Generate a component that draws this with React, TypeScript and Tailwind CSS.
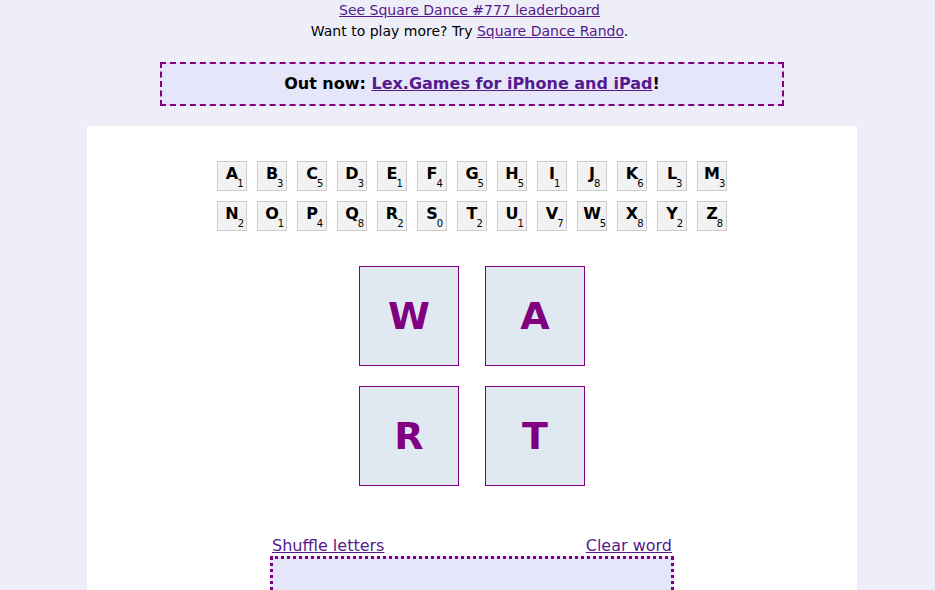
const row1: [string, number][] = [
  ["A", 1], ["B", 3], ["C", 5], ["D", 3], ["E", 1], ["F", 4], ["G", 5],
  ["H", 5], ["I", 1], ["J", 8], ["K", 6], ["L", 3], ["M", 3],
];
const row2: [string, number][] = [
  ["N", 2], ["O", 1], ["P", 4], ["Q", 8], ["R", 2], ["S", 0], ["T", 2],
  ["U", 1], ["V", 7], ["W", 5], ["X", 8], ["Y", 2], ["Z", 8],
];

function SmallTile({ letter, score }: { letter: string; score: number }) {
  return (
    <div className="flex h-[30px] w-[30px] items-start justify-center border border-[#cccccc] bg-[#f2f2f2] pt-[4px]">
      <span className="relative text-[16px] font-bold leading-none text-black">
        {letter}
        <span className="absolute left-full top-[13px] ml-[-1px] text-[10px] font-normal leading-none text-black">
          {score}
        </span>
      </span>
    </div>
  );
}

function BigTile({ letter }: { letter: string }) {
  return (
    <div className="flex h-[100px] w-[100px] items-center justify-center border border-[#800080] bg-[#e0e8f1]">
      <span className="text-[38px] font-bold leading-none text-[#800080]">{letter}</span>
    </div>
  );
}

export default function App() {
  return (
    <div
      className="min-h-[590px] bg-[#eeeef9] pl-[9px] text-black"
      style={{ fontFamily: '"DejaVu Sans", sans-serif' }}
    >
      <div className="flex flex-col items-center pr-[5px] text-[14px] leading-[20px]">
        <a href="#" className="text-[#551a8b] underline">
          See Square Dance #777 leaderboard
        </a>
        <p className="mt-[1px]">
          Want to play more? Try{" "}
          <a href="#" className="text-[#551a8b] underline">
            Square Dance Rando
          </a>
          .
        </p>
      </div>

      <div className="mx-auto mt-[21px] flex h-[44px] w-[624px] items-center justify-center border-2 border-dashed border-[#800080] bg-[#e6e6fa] text-[16px] font-bold">
        Out now:&nbsp;
        <a href="#" className="text-[#551a8b] underline">
          Lex.Games for iPhone and iPad
        </a>
        !
      </div>

      <div className="mx-auto mt-[20px] w-[770px] bg-white pt-[35px]">
        <div className="flex flex-col items-center gap-[10px]">
          {[row1, row2].map((row, i) => (
            <div key={i} className="flex gap-[10px]">
              {row.map(([l, s]) => (
                <SmallTile key={l} letter={l} score={s} />
              ))}
            </div>
          ))}
        </div>

        <div className="mt-[35px] flex flex-col items-center gap-[20px]">
          <div className="flex gap-[26px]">
            <BigTile letter="W" />
            <BigTile letter="A" />
          </div>
          <div className="flex gap-[26px]">
            <BigTile letter="R" />
            <BigTile letter="T" />
          </div>
        </div>

        <div className="mx-auto mt-[50px] w-[404px]">
          <div className="flex justify-between px-[2px] text-[16px] leading-[20px]">
            <a href="#" className="text-[#551a8b] underline">
              Shuffle letters
            </a>
            <a href="#" className="text-[#551a8b] underline">
              Clear word
            </a>
          </div>
          <div className="h-[60px] border-[3px] border-dotted border-[#800080] bg-[#e6e6fa]" />
        </div>
      </div>
    </div>
  );
}
